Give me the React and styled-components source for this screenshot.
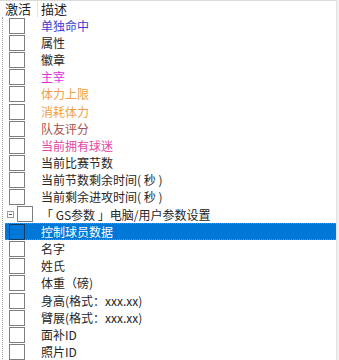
import styled, { createGlobalStyle } from 'styled-components';

const GlobalStyle = createGlobalStyle`
  html, body {
    margin: 0;
    padding: 0;
    background: #fff;
  }
  body {
    font-family: "Microsoft YaHei", "Noto Sans CJK SC", "Noto Sans", sans-serif;
  }
`;

const COLORS = {
  text: '#262626',
  blue: '#3c3ccf',
  magenta: '#e02fe0',
  orange: '#f0a045',
  brown: '#a5544c',
  pink: '#e346a6',
  selected: '#0078d7',
  box: '#7f7f7f'
};

const ROWS = [
  { label: '单独命中', color: COLORS.blue },
  { label: '属性' },
  { label: '徽章' },
  { label: '主宰', color: COLORS.magenta },
  { label: '体力上限', color: COLORS.orange },
  { label: '消耗体力', color: COLORS.orange },
  { label: '队友评分', color: COLORS.brown },
  { label: '当前拥有球迷', color: COLORS.pink },
  { label: '当前比赛节数' },
  { label: '当前节数剩余时间( 秒 )' },
  { label: '当前剩余进攻时间( 秒 )' },
  { label: '「 GS参数 」电脑/用户参数设置', group: true },
  { label: '控制球员数据', selected: true },
  { label: '名字' },
  { label: '姓氏' },
  { label: '体重（磅)' },
  { label: '身高(格式：xxx.xx)' },
  { label: '臂展(格式：xxx.xx)' },
  { label: '面补ID' },
  { label: '照片ID' }
];

export default function App() {
  return (
    <>
      <GlobalStyle />
      <Page>
        <Tree>
          <Header>
            <HeaderCell $width={38}>激活</HeaderCell>
            <HeaderCell>描述</HeaderCell>
          </Header>
          <Body>
            {ROWS.map((row) => (
              <Row key={row.label} $selected={row.selected}>
                <CheckCell $selected={row.selected}>
                  {row.group && <Toggle />}
                  <Box $selected={row.selected} $group={row.group} />
                </CheckCell>
                <Label $color={row.color} $selected={row.selected}>
                  {row.label}
                </Label>
              </Row>
            ))}
          </Body>
        </Tree>
        <Scrollbar />
      </Page>
    </>
  );
}

const Page = styled.div`
  display: flex;
  width: 339px;
  height: 360px;
  overflow: hidden;
  background: #fff;
`;

const Tree = styled.div`
  flex: 1;
  display: flex;
  flex-direction: column;
  border-top: 1px solid #dadada;
  border-right: 1px solid #e3e3e3;
`;

const Scrollbar = styled.div`
  width: 2px;
  background: #f0f0f0;
`;

const Header = styled.div`
  display: flex;
  height: 16px;
  align-items: center;
`;

const HeaderCell = styled.div`
  width: ${({ $width }) => ($width ? `${$width}px` : 'auto')};
  padding-left: ${({ $width }) => ($width ? '5px' : '3px')};
  box-sizing: border-box;
  height: 100%;
  border-right: ${({ $width }) => ($width ? '1px solid #e2e2e2' : 'none')};
  font-size: 13px;
  line-height: 16px;
  color: #1e1e1e;
`;

const Body = styled.div`
  display: flex;
  flex-direction: column;
  border-left: 1px dotted #a0a0a0;
  margin-left: 2px;
`;

const Row = styled.div`
  display: flex;
  align-items: center;
  height: 17.2px;
  box-sizing: border-box;
  margin-left: ${({ $selected }) => ($selected ? '2px' : '0')};
  background: ${({ $selected }) => ($selected ? COLORS.selected : 'transparent')};
  border-top: 1px dotted ${({ $selected }) => ($selected ? '#7a8a99' : 'transparent')};
  border-bottom: 1px dotted ${({ $selected }) => ($selected ? '#7a8a99' : 'transparent')};
`;

const CheckCell = styled.div`
  display: flex;
  align-items: center;
  width: ${({ $selected }) => ($selected ? '34px' : '36px')};
  padding-left: 4px;
  box-sizing: border-box;
`;

const Toggle = styled.span`
  position: relative;
  width: 7px;
  height: 7px;
  border: 1px solid #9a9a9a;
  box-sizing: border-box;
  margin-right: 3px;
  background: #fff;

  &::after {
    content: '';
    position: absolute;
    left: 1px;
    right: 1px;
    top: 2px;
    height: 1px;
    background: #555;
  }
`;

const Box = styled.span`
  display: block;
  width: 16px;
  height: 16px;
  box-sizing: border-box;
  margin-left: ${({ $group, $selected }) => ($group || $selected ? '0' : '2px')};
  margin-top: ${({ $group }) => ($group ? '-2px' : '0')};
  border: 1px solid ${({ $selected }) => ($selected ? '#173a66' : COLORS.box)};
  background: ${({ $selected }) => ($selected ? COLORS.selected : '#fff')};
`;

const Label = styled.span`
  font-size: 12px;
  line-height: 16px;
  white-space: nowrap;
  padding-left: 2px;
  color: ${({ $selected, $color }) => ($selected ? '#fff' : $color || COLORS.text)};
`;
